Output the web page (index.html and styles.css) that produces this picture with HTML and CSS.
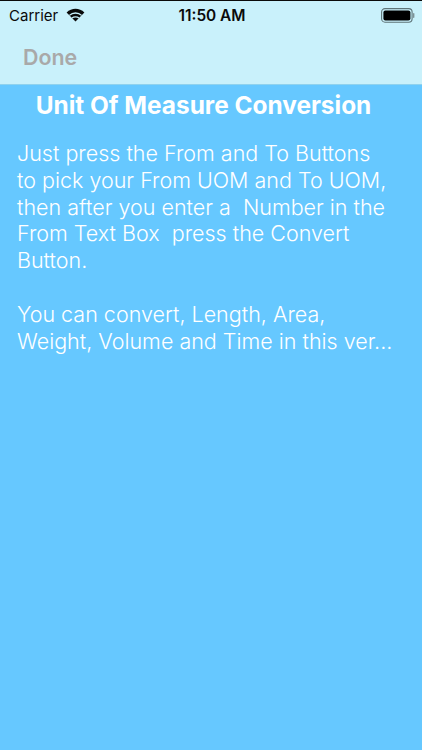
FILE: index.html
```html
<!DOCTYPE html>
<html lang="en-US">
<head>
<meta charset="UTF-8" />
<title>Unit Of Measure Conversion</title>
<link rel="stylesheet" href="styles.css">
</head>
<body>
    <div class="top-edge"></div>
    <header class="header">
        <div class="status">
            <div class="status__left">
                <span class="carrier">Carrier</span>
                <svg class="wifi" width="19" height="14" viewBox="0 0 19 14">
                    <path d="M9.5 13.6 L0.6 4.6 C5.6 -0.4 13.4 -0.4 18.4 4.6 Z" fill="#0a0a0a"/>
                    <path d="M3.4 7.4 C6.8 4.2 12.2 4.2 15.6 7.4" fill="none" stroke="#c9f1fb" stroke-width="1.3"/>
                    <path d="M6 10 C7.9 8.4 11.1 8.4 13 10" fill="none" stroke="#c9f1fb" stroke-width="1.3"/>
                </svg>
            </div>
            <span class="clock">11:50 AM</span>
            <div class="status__right">
                <svg class="battery" width="34" height="15" viewBox="0 0 34 15">
                    <rect x="0.6" y="0.6" width="30.5" height="13.6" rx="3.4" fill="none" stroke="#5f7478" stroke-width="1.1"/>
                    <rect x="2.4" y="2.4" width="27" height="10" rx="2" fill="#000"/>
                    <rect x="32" y="5" width="1.4" height="5" rx="0.7" fill="#7d9296"/>
                </svg>
            </div>
        </div>
        <nav class="navbar">
            <button class="done">Done</button>
        </nav>
    </header>
    <main class="content">
        <h1 class="title">Unit Of Measure Conversion</h1>
        <p class="info">Just press the From and To Buttons
to pick your From UOM and To UOM,
then after you enter a  Number in the
From Text Box  press the Convert
Button.

You can convert, Length, Area,
Weight, Volume and Time in this ver...</p>
    </main>
</body>
</html>
```
FILE: styles.css
```css
*{
    box-sizing: border-box;
    font-family: Inter, "Liberation Sans", Arial, sans-serif;
}
html, body{
    margin: 0;
    padding: 0;
    height: 100%;
}
body{
    width: 422px;
    height: 750px;
    overflow: hidden;
    display: flex;
    flex-direction: column;
    background-color: #66c8ff;
}
.top-edge{
    height: 1px;
    background-color: #0a0a0a;
}
.header{
    height: 84px;
    background-color: #c9f1fb;
    border-bottom: 1px solid #8fd2ee;
}
.status{
    height: 28px;
    padding: 0 7px 0 9px;
    display: grid;
    grid-template-columns: 1fr auto 1fr;
    align-items: center;
    color: #0a0a0a;
}
.status__left{
    display: flex;
    align-items: center;
    gap: 8px;
}
.status__right{
    display: flex;
    justify-content: flex-end;
}
.carrier{
    font-size: 15px;
}
.clock{
    font-size: 15.4px;
    font-weight: 600;
}
.navbar{
    height: 55px;
    display: flex;
    align-items: center;
    padding-left: 23px;
}
.done{
    padding: 0;
    border: none;
    background: none;
    color: #a9a9a9;
    font-size: 21.4px;
    font-weight: 600;
}
.content{
    flex: 1;
    padding: 5px 17px 0;
}
.title{
    margin: 0 15px 0 0;
    text-align: center;
    color: #fff;
    font-size: 24.4px;
    font-weight: 700;
    line-height: 30px;
}
.info{
    margin: 20px 0 0;
    color: #fff;
    font-size: 21.5px;
    font-weight: 300;
    line-height: 26.8px;
    white-space: pre;
}
```
